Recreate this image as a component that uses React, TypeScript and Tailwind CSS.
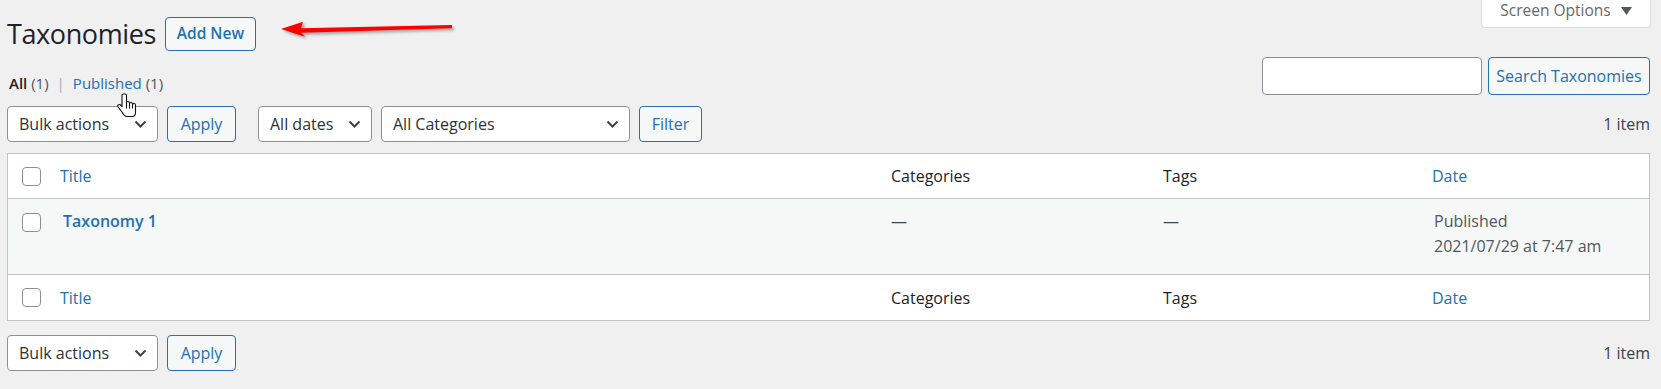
import React from "react";

function Chevron() {
  return (
    <svg width="13" height="8" viewBox="0 0 13 8" className="shrink-0">
      <path d="M1.5 1.5 L6.5 6.5 L11.5 1.5" fill="none" stroke="#3c434a" strokeWidth="2" />
    </svg>
  );
}

function Select({ label, w }: { label: string; w: string }) {
  return (
    <div
      className={`${w} h-[36px] bg-white border border-[#8c8f94] rounded-[4px] flex items-center justify-between pl-[11px] pr-[10px] text-[16px] text-[#2c3338]`}
    >
      <span>{label}</span>
      <Chevron />
    </div>
  );
}

function Btn({ label, w }: { label: string; w: string }) {
  return (
    <div
      className={`${w} h-[36px] bg-[#f6f7f7] border border-[#2271b1] rounded-[4px] flex items-center justify-center text-[16px] text-[#2271b1]`}
    >
      {label}
    </div>
  );
}

function Checkbox() {
  return <div className="w-[19px] h-[19px] bg-white border border-[#8c8f94] rounded-[4px]" />;
}

function Hand() {
  return (
    <svg width="20" height="25" viewBox="0 0 20 25" className="absolute left-[117px] top-[93px]">
      <path
        d="M6.5 1 C5.7 1 5 1.7 5 2.5 V13.5 L3.6 12 C2.9 11.3 1.8 11.3 1.2 12 C0.6 12.6 0.7 13.5 1.2 14.2 L5 19 C6 21 7 23 9.5 23.5 H15 C17 23.5 18.5 22 18.5 19.5 V12 C18.5 11.2 17.8 10.5 17 10.5 C16.2 10.5 15.5 11.2 15.5 12 V11 C15.5 10.2 14.8 9.5 14 9.5 C13.2 9.5 12.5 10.2 12.5 11 V10 C12.5 9.2 11.8 8.5 11 8.5 C10.2 8.5 9.5 9.2 9.5 10 V2.5 C9.5 1.7 8.8 1 8 1 Z"
        fill="white"
        stroke="#111"
        strokeWidth="1.1"
        strokeLinejoin="round"
      />
      <path d="M9.5 10 V15.5 M12.5 11 V15.5 M15.5 12 V15.5" stroke="#111" strokeWidth="1.1" fill="none" />
    </svg>
  );
}

function Arrow() {
  return (
    <svg
      width="190"
      height="30"
      viewBox="0 0 190 30"
      className="absolute left-[275px] top-[15px] drop-shadow-[2px_2px_1.5px_rgba(0,0,0,0.35)]"
    >
      <polygon points="6,14 28,6.7 26,13.2 177,10 177,13.3 26,17.8 30,21.7" fill="#f00" />
    </svg>
  );
}

function HeadRow({ border }: { border?: boolean }) {
  return (
    <div className={`flex h-[45px] items-center ${border ? "border-b border-[#c3c4c7]" : ""}`}>
      <div className="w-[43px] pl-[14px]"><Checkbox /></div>
      <div className="w-[831px] pl-[9px] text-[#2271b1]">Title</div>
      <div className="w-[272px] pl-[9px] text-[#1d2327]">Categories</div>
      <div className="w-[269px] pl-[9px] text-[#1d2327]">Tags</div>
      <div className="flex-1 pl-[9px] text-[#2271b1]">Date</div>
    </div>
  );
}

export default function App() {
  const font = "font-['Open_Sans',sans-serif]";
  return (
    <div className={`${font} relative w-full h-[389px] bg-[#f0f0f1] pl-[7px] pr-[11px] overflow-hidden text-[#3c434a]`}>
      {/* header row */}
      <div className="flex items-start justify-between">
        <div className="flex items-center mt-[17px] h-[34px]">
          <h1 className="text-[27px] leading-[34px] text-[#1d2327] tracking-[-0.4px]">Taxonomies</h1>
          <div className="ml-[9px] w-[91px] h-[34px] border border-[#2271b1] rounded-[4px] bg-[#f6f7f7] flex items-center justify-center text-[15.5px] font-semibold text-[#2271b1]">
            Add New
          </div>
        </div>
        <div className="w-[170px] h-[28px] bg-white border border-t-0 border-[#dcdcde] rounded-b-[4px] flex items-center justify-center gap-[10px] text-[15.5px] text-[#646970] -mr-px">
          <span className="-mt-[6px]">Screen Options</span>
          <svg width="11" height="8" viewBox="0 0 11 8" className="-mt-[6px]">
            <polygon points="0,0 11,0 5.5,8" fill="#50575e" />
          </svg>
        </div>
      </div>

      {/* subsubsub + search */}
      <div className="flex items-end justify-between mt-[6px]">
        <div className="text-[15px] leading-[22px] pl-[2px] mb-[1px] text-[#50575e] flex gap-[5px]">
          <span>
            <span className="font-semibold text-[#1d2327]">All</span> (1)
          </span>
          <span className="text-[#a7aaad] mx-[3px]">|</span>
          <span>
            <span className="text-[#2271b1]">Published</span> (1)
          </span>
        </div>
        <div className="flex gap-[6px]">
          <div className="w-[220px] h-[38px] bg-white border border-[#8c8f94] rounded-[4px]" />
          <div className="w-[162px] h-[38px] bg-[#f6f7f7] border border-[#2271b1] rounded-[4px] flex items-center justify-center text-[16px] text-[#2271b1]">
            Search Taxonomies
          </div>
        </div>
      </div>

      {/* top tablenav */}
      <div className="flex items-center justify-between mt-[11px]">
        <div className="flex items-center">
          <Select label="Bulk actions" w="w-[151px]" />
          <div className="ml-[9px]">
            <Btn label="Apply" w="w-[69px]" />
          </div>
          <div className="ml-[22px]">
            <Select label="All dates" w="w-[114px]" />
          </div>
          <div className="ml-[9px]">
            <Select label="All Categories" w="w-[249px]" />
          </div>
          <div className="ml-[9px]">
            <Btn label="Filter" w="w-[63px]" />
          </div>
        </div>
        <div className="text-[16px] text-[#3c434a]">1 item</div>
      </div>

      {/* table */}
      <div className="mt-[11px] border border-[#c3c4c7] bg-white text-[16px]">
        <HeadRow border />
        <div className="flex h-[76px] items-start border-b border-[#c3c4c7] bg-[#f6f7f7]">
          <div className="w-[43px] pl-[14px] pt-[14px]"><Checkbox /></div>
          <div className="w-[831px] pl-[12px] pt-[10px] leading-[25px] font-semibold text-[#2271b1]">Taxonomy 1</div>
          <div className="w-[272px] pl-[9px] pt-[10px] leading-[25px] text-[#3c434a]">—</div>
          <div className="w-[269px] pl-[9px] pt-[10px] leading-[25px] text-[#3c434a]">—</div>
          <div className="flex-1 pl-[11px] pt-[10px] leading-[25px] text-[#50575e]">
            <div>Published</div>
            <div>2021/07/29 at 7:47 am</div>
          </div>
        </div>
        <HeadRow />
      </div>

      {/* bottom tablenav */}
      <div className="flex items-center justify-between mt-[14px]">
        <div className="flex items-center">
          <Select label="Bulk actions" w="w-[151px]" />
          <div className="ml-[9px]">
            <Btn label="Apply" w="w-[69px]" />
          </div>
        </div>
        <div className="text-[16px] text-[#3c434a]">1 item</div>
      </div>

      <Arrow />
      <Hand />
    </div>
  );
}
